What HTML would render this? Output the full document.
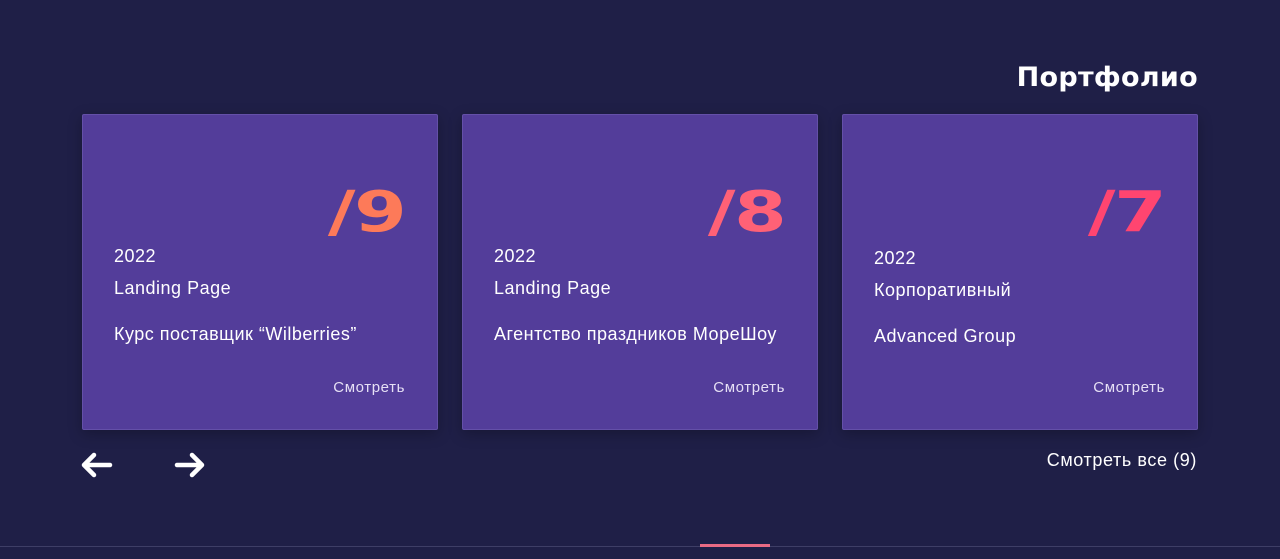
<!DOCTYPE html>
<html><head><meta charset="utf-8"><style>
body{margin:0;width:1280px;height:559px;background:#1f1f47;font-family:"Liberation Sans","DejaVu Sans",sans-serif;color:#fff;position:relative;overflow:hidden}
h2{position:absolute;right:82px;top:62px;margin:0;font-size:27px;font-weight:bold;font-family:"DejaVu Sans",sans-serif;letter-spacing:0.3px}
.card{position:absolute;top:114px;width:354px;height:314px;background:#533d9a;border:1px solid #6450a8;border-radius:2px;box-shadow:0 4px 14px rgba(0,0,0,.25)}
.num{position:absolute;right:32px;top:70px;font-size:56px;font-weight:bold;line-height:56px;font-family:"DejaVu Sans",sans-serif;transform:scaleX(1.35);transform-origin:right top;letter-spacing:-1px}
.t{position:absolute;left:31px;font-size:18px;letter-spacing:0.5px}
.s{position:absolute;right:32px;top:264px;font-size:15px;letter-spacing:0.6px;color:#e6e0f5}
.all{position:absolute;right:83px;top:450px;font-size:18px;letter-spacing:0.6px}
.line{position:absolute;left:0;right:0;top:546px;height:1px;background:#3e3e66}
.pink{position:absolute;left:700px;top:544px;width:70px;height:3px;background:#e96a84}
</style></head><body>
<h2>Портфолио</h2>
<div class="card" style="left:82px"><div class="num" style="color:#fd7a59">/9</div><div class="t" style="top:131px">2022</div><div class="t" style="top:163px">Landing Page</div><div class="t" style="top:209px">Курс поставщик “Wilberries”</div><div class="s">Смотреть</div></div>
<div class="card" style="left:462px"><div class="num" style="color:#ff6176">/8</div><div class="t" style="top:131px">2022</div><div class="t" style="top:163px">Landing Page</div><div class="t" style="top:209px">Агентство праздников МореШоу</div><div class="s">Смотреть</div></div>
<div class="card" style="left:842px"><div class="num" style="color:#ff4570">/7</div><div class="t" style="top:133px">2022</div><div class="t" style="top:165px">Корпоративный</div><div class="t" style="top:211px">Advanced Group</div><div class="s">Смотреть</div></div>
<svg style="position:absolute;left:80px;top:450px" width="130" height="30"><g fill="none" stroke="#fff" stroke-width="4.5" stroke-linecap="round" stroke-linejoin="round"><path d="M30 15H5M14 5 4 15l10 10"/><path d="M97 15h25M112 5l10 10-10 10"/></g></svg>
<div class="all">Смотреть все (9)</div>
<div class="line"></div><div class="pink"></div>
</body></html>
